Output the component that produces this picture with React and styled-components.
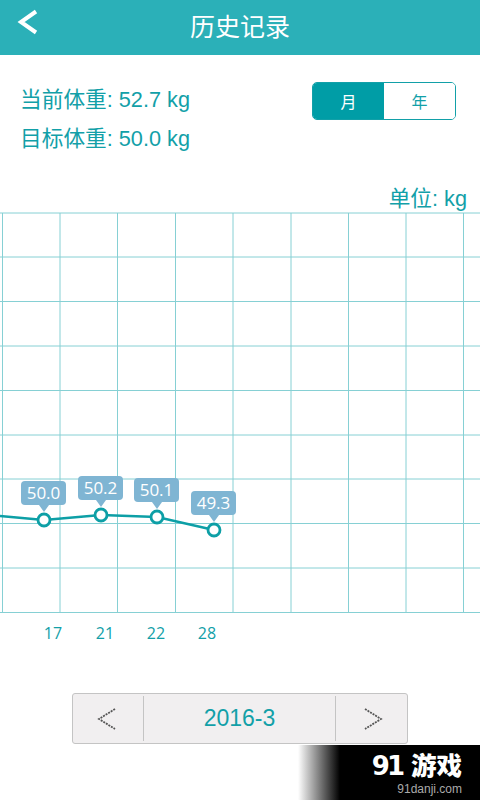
import styled, { createGlobalStyle } from "styled-components";

const GlobalStyle = createGlobalStyle`
  html, body {
    margin: 0;
    padding: 0;
    background: #fff;
  }
  body {
    font-family: "Liberation Sans", "Noto Sans CJK SC", sans-serif;
  }
`;

const gridX = [2.5, 60, 117.5, 175.5, 233, 291, 348.5, 406, 463.5];
const gridY = [213, 257, 301.5, 346, 390.5, 435, 479, 523.5, 568, 612.5];

const points = [
  { x: 44, y: 520, value: "50.0", top: 481 },
  { x: 101, y: 515, value: "50.2", top: 476 },
  { x: 157, y: 517, value: "50.1", top: 478 },
  { x: 214, y: 530, value: "49.3", top: 491 },
];

const labels = [
  { x: 53, text: "17" },
  { x: 105, text: "21" },
  { x: 156, text: "22" },
  { x: 207, text: "28" },
];

const Chart = () => (
  <ChartSvg viewBox="0 205 480 445">
    {gridX.map((x) => (
      <line key={x} x1={x} x2={x} y1={213} y2={612.5} stroke="#86d0d4" strokeWidth="1" />
    ))}
    {gridY.map((y) => (
      <line key={y} x1={0} x2={480} y1={y} y2={y} stroke="#86d0d4" strokeWidth="1" />
    ))}

    <polyline
      points={`0,516 ${points.map((p) => `${p.x},${p.y}`).join(" ")}`}
      fill="none"
      stroke="#0d9fa6"
      strokeWidth="2.5"
    />

    {points.map((p) => (
      <g key={p.value}>
        <rect x={p.x - 23} y={p.top} width="45" height="24" rx="4" fill="#7fb5d3" />
        <path d={`M${p.x - 5} ${p.top + 24} L${p.x} ${p.top + 31} L${p.x + 5} ${p.top + 24} Z`} fill="#7fb5d3" />
        <circle cx={p.x} cy={p.y} r="6" fill="#fff" stroke="#0d9fa6" strokeWidth="2.8" />
        <BubbleText x={p.x - 0.5} y={p.top + 18}>{p.value}</BubbleText>
      </g>
    ))}

    {labels.map((l) => (
      <AxisText key={l.text} x={l.x} y={639}>{l.text}</AxisText>
    ))}
  </ChartSvg>
);

export default function App() {
  return (
    <Page>
      <GlobalStyle />
      <Header>
        <BackButton>
          <svg width="22" height="26" viewBox="0 0 22 26">
            <path d="M19 2.5 L4 13 L19 23.5" fill="none" stroke="#fff" strokeWidth="4" />
          </svg>
        </BackButton>
        <Title>历史记录</Title>
      </Header>

      <InfoRow>
        <Weights>
          <Weight>当前体重: 52.7 kg</Weight>
          <Weight>目标体重: 50.0 kg</Weight>
        </Weights>
        <Toggle>
          <ToggleItem $active>月</ToggleItem>
          <ToggleItem>年</ToggleItem>
        </Toggle>
      </InfoRow>

      <Unit>单位: kg</Unit>
      <Chart />

      <Pager>
        <PagerArrow $width="70px" $shift="-1px">
          <svg width="20" height="24" viewBox="0 0 20 24">
            <path d="M18 2 L2 12 L18 22" fill="none" stroke="#555" strokeWidth="1.8" strokeDasharray="2 1" />
          </svg>
        </PagerArrow>
        <PagerDate>2016-3</PagerDate>
        <PagerArrow $width="71px" $shift="1px">
          <svg width="20" height="24" viewBox="0 0 20 24">
            <path d="M2 2 L18 12 L2 22" fill="none" stroke="#555" strokeWidth="1.8" strokeDasharray="2 1" />
          </svg>
        </PagerArrow>
      </Pager>

      <Watermark>
        <WatermarkLogo>
          <LogoNum>91</LogoNum>游戏
        </WatermarkLogo>
        <WatermarkUrl>91danji.com</WatermarkUrl>
      </Watermark>
    </Page>
  );
}

const Page = styled.div`
  position: relative;
  width: 480px;
  height: 800px;
  overflow: hidden;
  background: #fff;
`;

const Header = styled.header`
  display: flex;
  align-items: center;
  justify-content: center;
  position: relative;
  height: 55px;
  padding-bottom: 6px;
  box-sizing: border-box;
  background: #2bb0b8;
`;

const BackButton = styled.div`
  position: absolute;
  left: 17px;
  top: 9px;
  line-height: 0;
`;

const Title = styled.h1`
  margin: 0;
  color: #fff;
  font-size: 25px;
  font-weight: 400;
  font-family: "Noto Sans CJK SC", sans-serif;
`;

const InfoRow = styled.section`
  display: flex;
  justify-content: space-between;
  align-items: flex-start;
  padding: 27px 24px 0 20px;
  height: 130px;
  box-sizing: border-box;
`;

const Weights = styled.div`
  display: flex;
  flex-direction: column;
  gap: 11px;
  padding-top: 4px;
`;

const Weight = styled.div`
  color: #12a0a8;
  font-size: 21.7px;
  line-height: 28px;
`;

const Toggle = styled.div`
  display: flex;
  width: 144px;
  height: 38px;
  box-sizing: border-box;
  border: 1px solid #12a0a8;
  border-radius: 5px;
  overflow: hidden;
`;

const ToggleItem = styled.div`
  flex: 1;
  display: flex;
  align-items: center;
  justify-content: center;
  font-size: 16px;
  color: ${(p) => (p.$active ? "#fff" : "#12a0a8")};
  background: ${(p) => (p.$active ? "#009da6" : "#fff")};
`;

const Unit = styled.div`
  text-align: right;
  padding-right: 13px;
  color: #12a0a8;
  font-size: 21.7px;
  line-height: 28px;
  height: 28px;
`;

const ChartSvg = styled.svg`
  display: block;
  width: 480px;
  height: 445px;
  margin-top: -8px;
`;

const BubbleText = styled.text`
  fill: #fff;
  font-family: "Open Sans", sans-serif;
  font-size: 17px;
  text-anchor: middle;
`;

const AxisText = styled.text`
  fill: #12a0a8;
  font-family: "Open Sans", sans-serif;
  font-size: 16px;
  text-anchor: middle;
`;

const Pager = styled.div`
  display: flex;
  align-items: stretch;
  box-sizing: border-box;
  width: 336px;
  height: 51px;
  margin: 43px 0 0 72px;
  padding: 2px 0;
  background: #f1eff0;
  border: 1px solid #c4c4c4;
  border-radius: 3px;
`;

const PagerArrow = styled.div`
  width: ${(p) => p.$width};
  display: flex;
  align-items: center;
  justify-content: center;
  svg {
    transform: translateX(${(p) => p.$shift});
  }
`;

const PagerDate = styled.div`
  flex: 1;
  display: flex;
  align-items: center;
  justify-content: center;
  color: #12a0a8;
  font-size: 23px;
  border-left: 1px solid #c4c4c4;
  border-right: 1px solid #c4c4c4;
`;

const Watermark = styled.div`
  position: absolute;
  right: 0;
  bottom: 0;
  width: 182px;
  height: 55px;
  box-sizing: border-box;
  padding: 4px 18px 0 0;
  display: flex;
  flex-direction: column;
  align-items: flex-end;
  background: linear-gradient(to right, #fff 0, #000 42px);
`;

const WatermarkLogo = styled.div`
  color: #fff;
  font-family: "Noto Sans CJK SC", sans-serif;
  font-size: 25.5px;
  font-weight: 900;
  line-height: 30px;
`;

const LogoNum = styled.span`
  font-family: "DejaVu Sans", sans-serif;
  font-weight: 700;
  font-size: 26px;
  letter-spacing: -3px;
  margin-right: 9px;
`;

const WatermarkUrl = styled.div`
  color: #aaa;
  font-family: "Liberation Sans", sans-serif;
  font-size: 12px;
  line-height: 16px;
`;
